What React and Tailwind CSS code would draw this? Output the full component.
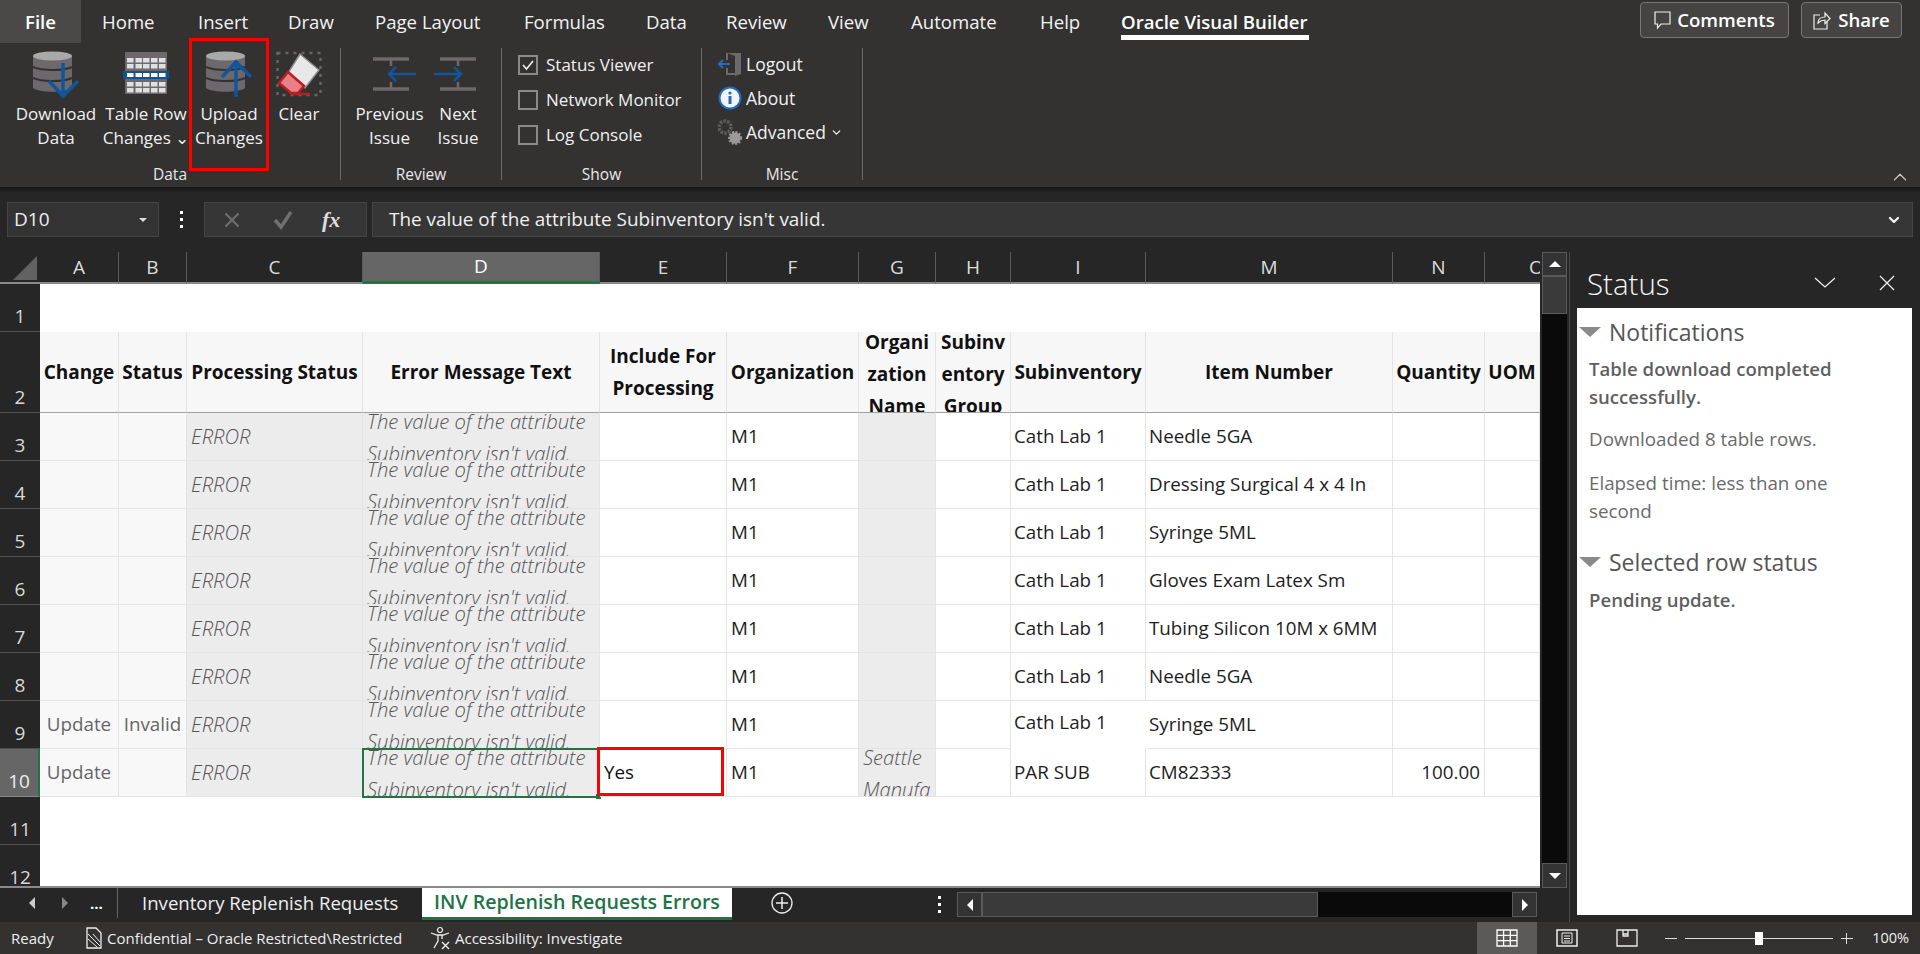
import { ChevronDown, ChevronUp, X } from "lucide-react";

const font = { fontFamily: '"Open Sans", "Noto Sans", sans-serif' };

const tabs = [
  { label: "Home", cls: "ml-[21px] w-[96px]" },
  { label: "Insert", cls: "w-[90px]" },
  { label: "Draw", cls: "w-[87px]" },
  { label: "Page Layout", cls: "w-[149px]" },
  { label: "Formulas", cls: "w-[122px]" },
  { label: "Data", cls: "w-[80px]" },
  { label: "Review", cls: "w-[102px]" },
  { label: "View", cls: "w-[83px]" },
  { label: "Automate", cls: "w-[129px]" },
  { label: "Help", cls: "w-[81px]" },
];

const items = [
  "Needle 5GA",
  "Dressing Surgical 4 x 4 In",
  "Syringe 5ML",
  "Gloves Exam Latex Sm",
  "Tubing Silicon 10M x 6MM",
  "Needle 5GA",
  "Syringe 5ML",
  "CM82333",
];

const colLetters = ["A", "B", "C", "D", "E", "F", "G", "H", "I", "M", "N"];

function DbIcon({ up }) {
  return (
    <svg width="46" height="48" viewBox="0 0 46 48">
      <path d="M0 6h39v32c-6 5-33 5-39 0z" fill="#6d686b" />
      <ellipse cx="19.5" cy="6" rx="19.5" ry="4.5" fill="#a9a9a9" />
      <path d="M0 17c8 4 31 4 39 0M0 28c8 4 31 4 39 0" stroke="#333231" strokeWidth="2" fill="none" />
      {up ? (
        <path d="M30 47V12M16 27l14-15 15 15" stroke="#10569c" strokeWidth="3.5" fill="none" />
      ) : (
        <path d="M30 13v33M16 31l14 15 15-15" stroke="#10569c" strokeWidth="3.5" fill="none" />
      )}
    </svg>
  );
}

function TableIcon() {
  return (
    <svg width="46" height="44" viewBox="0 0 46 44">
      <rect x="2" y="0" width="42" height="42" fill="#6d686b" />
      {[6, 12, 30, 36].map((y) =>
        [4, 12.5, 20, 28, 36].map((x) => <rect key={x + "-" + y} x={x} y={y} width="6.5" height="4.5" fill="#e0e0e0" />)
      )}
      <rect x="0" y="19" width="46" height="8" fill="#12528f" />
      {[4, 12.5, 20, 28, 36].map((x) => <rect key={x} x={x} y="21" width="6.5" height="4" fill="#fff" />)}
    </svg>
  );
}

function EraserIcon() {
  return (
    <svg width="46" height="46" viewBox="0 0 46 46">
      <rect x="1.5" y="2" width="43" height="42" fill="none" stroke="#666" strokeWidth="2.5" strokeDasharray="3 5" />
      <path d="M24 3l19 16-14 18L12 22z" fill="#e8e8e8" stroke="#8a8a8a" strokeWidth="1.5" />
      <path d="M12 21L28 35l-6 7H15L3 32z" fill="#e8808a" stroke="#b81f1f" strokeWidth="2.5" />
      <path d="M15 43h19" stroke="#b81f1f" strokeWidth="2.5" />
    </svg>
  );
}

function IssueIcon({ next }) {
  return (
    <svg width="43" height="34" viewBox="0 0 43 34" className={next ? "mr-[5px]" : "ml-[9px]"}>
      <g transform={next ? "translate(6 0)" : ""}>
        <path d="M0 2h36M0 32h36" stroke="#6d686b" strokeWidth="3.5" />
      </g>
      <path d={next ? "M24 2v7M24 25v7" : "M18 2v7M18 25v7"} stroke="#6d686b" strokeWidth="2.5" />
      {next ? (
        <path d="M0 17h27M20 10l7 7-7 7" stroke="#10569c" strokeWidth="2.5" fill="none" />
      ) : (
        <path d="M43 17H16M23 10l-7 7 7 7" stroke="#10569c" strokeWidth="2.5" fill="none" />
      )}
    </svg>
  );
}

function RibbonButton({ icon, lines, cls }) {
  return (
    <div className={`flex flex-col items-center ${cls}`}>
      <div className="flex h-[52px] items-center">{icon}</div>
      <div className="mt-[2px] flex flex-col items-center whitespace-nowrap text-[17px] leading-[24px] text-[#f0f0f0]">
        {lines.map((l) => (
          <span key={l}>{l}</span>
        ))}
      </div>
    </div>
  );
}

function Group({ label, cls, children }) {
  return (
    <div className={`flex h-[132px] flex-col border-r border-[#6a6a6a] ${cls}`}>
      <div className="min-h-0 flex-1">{children}</div>
      <div className="-mb-[3px] text-center text-[15.5px] leading-[18px] text-[#e8e8e8]">{label}</div>
    </div>
  );
}

function Check({ label, checked }) {
  return (
    <div className="flex h-[35px] items-center gap-[8px] text-[17px] text-[#f0f0f0]">
      <span className="flex h-[20px] w-[20px] items-center justify-center border-2 border-[#8a8a8a]">
        {checked && (
          <svg width="14" height="14" viewBox="0 0 14 14">
            <path d="M2 7l3.5 4L12 3" stroke="#f0f0f0" strokeWidth="1.6" fill="none" />
          </svg>
        )}
      </span>
      {label}
    </div>
  );
}

function Cell({ cls = "", children }) {
  return (
    <div className={`relative flex items-center overflow-hidden whitespace-nowrap border-b border-r border-[#e4e4e4] text-[18.8px] text-[#1d1d1d] ${cls}`}>
      {children}
    </div>
  );
}

function ErrorText() {
  return (
    <div className="-mt-[8px] self-start whitespace-normal pl-[4px] text-[20.2px] font-light italic leading-[32px] text-[#555]">
      The value of the attribute Subinventory isn't valid.
    </div>
  );
}

function DataRow({ i }) {
  const row = i + 3;
  const last = row === 10;
  const nine = row === 9;
  return (
    <>
      <RowHead n={row} active={last} />
      <Cell cls="justify-center bg-[#f8f8f8] text-[#666]">{row >= 9 && "Update"}</Cell>
      <Cell cls="justify-center bg-[#f8f8f8] text-[#666]">{nine && "Invalid"}</Cell>
      <Cell cls="bg-[#ececec] pl-[4px] text-[20.2px] font-light italic text-[#555]">ERROR</Cell>
      <Cell cls="!overflow-visible bg-[#ececec]">
        <div className="h-full overflow-hidden"><ErrorText /></div>
        {last && (
          <div className="absolute -left-[1px] -top-[1px] bottom-[-2px] right-[-1px] border-2 border-[#217346]">
            <div className="absolute -bottom-[3px] -right-[3px] h-[5px] w-[5px] bg-[#217346]" />
          </div>
        )}
      </Cell>
      <Cell cls="!overflow-visible pl-[4px] text-[#111]">
        {last && "Yes"}
        {last && <div className="absolute -left-[3px] -top-[2px] bottom-0 right-[2px] border-[3px] border-[#ff0000]" />}
      </Cell>
      <Cell cls="pl-[4px]">M1</Cell>
      <Cell cls="bg-[#ececec]">
        {last && (
          <div className="-mt-[8px] self-start whitespace-normal pl-[4px] text-[20.2px] font-light italic leading-[32px] text-[#555]">
            Seattle Manufa
          </div>
        )}
      </Cell>
      <Cell />
      <Cell cls={`pl-[3px] ${nine ? "border-white pb-[4px]" : ""}`}>{last ? "PAR SUB" : "Cath Lab 1"}</Cell>
      <Cell cls="pl-[3px]">{items[i]}</Cell>
      <Cell cls="justify-end pr-[4px]">{last && "100.00"}</Cell>
      <Cell />
    </>
  );
}

function RowHead({ n, active }) {
  return (
    <div className={`flex items-end justify-center border-b pb-[1px] text-[19px] leading-[28px] ${active ? "border-r-2 border-b-[#888] border-r-[#217346] bg-[#666] text-[#eee]" : "border-[#4f4f4f] bg-[#262626] text-[#d8d8d8]"}`}>
      {n}
    </div>
  );
}

function HeadCell({ children, cls = "" }) {
  return (
    <div className={`flex items-center justify-center overflow-hidden border-b border-r border-b-[#a0a0a0] border-r-[#e4e4e4] bg-[#f7f7f7] text-center text-[19px] font-bold leading-[32px] text-[#111] ${cls}`}>
      {children}
    </div>
  );
}

function ThreeLines({ lines }) {
  return (
    <div className="-mt-[6px] flex flex-col">
      {lines.map((l) => (
        <span key={l}>{l}</span>
      ))}
    </div>
  );
}

export default function App() {
  return (
    <div style={font} className="flex h-screen w-screen flex-col overflow-hidden bg-[#262626] text-white">
      {/* TAB BAR */}
      <div className="flex h-[43px] items-center bg-[#333231] text-[18.6px]">
        <div className="flex h-full w-[81px] items-center justify-center bg-[#4a4947] font-semibold">File</div>
        {tabs.map((t) => (
          <div key={t.label} className={`whitespace-nowrap text-[#f2f2f2] ${t.cls}`}>{t.label}</div>
        ))}
        <div className="relative flex h-full w-[188px] items-center whitespace-nowrap font-semibold">
          Oracle Visual Builder
          <div className="absolute bottom-[3px] left-0 right-0 h-[5px] bg-white" />
        </div>
        <div className="ml-auto mb-[3px] mr-[18px] flex gap-[12px] text-[18.6px] font-semibold">
          <div className="flex h-[36px] w-[149px] items-center justify-center gap-[6px] rounded-[4px] border border-[#777] bg-[#454443]">
            <svg width="17" height="19" viewBox="0 0 17 19">
              <path d="M1 1h15v12H7l-3.5 4v-4H1z" fill="none" stroke="#eee" strokeWidth="1.2" />
            </svg>
            Comments
          </div>
          <div className="flex h-[36px] w-[101px] items-center justify-center gap-[7px] rounded-[4px] border border-[#777] bg-[#454443]">
            <svg width="18" height="20" viewBox="0 0 18 20">
              <path d="M7 5H1v14h13v-7" fill="none" stroke="#eee" strokeWidth="1.2" />
              <path d="M5 13c0-4 3-6 7-6V3l5 5.5-5 5V10c-3 0-5 1-7 3z" fill="none" stroke="#eee" strokeWidth="1.2" />
            </svg>
            Share
          </div>
        </div>
      </div>

      {/* RIBBON */}
      <div className="relative flex h-[144px] items-start bg-[#333231] pt-[5px]">
        <Group label="Data" cls="w-[341px]">
          <div className="flex">
            <RibbonButton cls="w-[112px]" icon={<DbIcon />} lines={["Download", "Data"]} />
            <RibbonButton cls="w-[68px]" icon={<TableIcon />} lines={["Table Row", "Changes ⌄"]} />
            <div className="ml-[9px] h-[133px] w-[80px] -translate-y-[10px] border-[3px] border-[#ff0000] pt-[7px]">
              <RibbonButton cls="" icon={<DbIcon up />} lines={["Upload", "Changes"]} />
            </div>
            <RibbonButton cls="ml-[5px] w-[50px]" icon={<EraserIcon />} lines={["Clear"]} />
          </div>
        </Group>
        <Group label="Review" cls="w-[161px]">
          <div className="flex pl-[15px]">
            <RibbonButton cls="w-[67px]" icon={<IssueIcon />} lines={["Previous", "Issue"]} />
            <RibbonButton cls="w-[70px]" icon={<IssueIcon next />} lines={["Next", "Issue"]} />
          </div>
        </Group>
        <Group label="Show" cls="w-[200px]">
          <div className="-mt-[1px] flex flex-col pl-[16px]">
            <Check checked label="Status Viewer" />
            <Check label="Network Monitor" />
            <Check label="Log Console" />
          </div>
        </Group>
        <Group label="Misc" cls="w-[161px]">
          <div className="-mt-[1px] flex flex-col pl-[16px] text-[17.5px] text-[#f0f0f0]">
            <div className="flex h-[34px] items-center gap-[4px]">
              <svg width="24" height="26" viewBox="0 0 24 26">
                <path d="M9 2h14v21l-6 2V5z" fill="#6d686b" />
                <path d="M9 2v7M9 17v6h8" stroke="#6d686b" strokeWidth="2" fill="none" />
                <path d="M12 13H1M5 9l-4 4 4 4" stroke="#2a6db5" strokeWidth="2" fill="none" />
              </svg>
              Logout
            </div>
            <div className="flex h-[34px] items-center gap-[4px]">
              <svg width="24" height="24" viewBox="0 0 24 24">
                <circle cx="12" cy="12" r="10.5" fill="#f4f4f4" stroke="#1f6cc0" strokeWidth="2" />
                <circle cx="12" cy="7" r="1.6" fill="#1f6cc0" />
                <rect x="10.5" y="10" width="3" height="8" fill="#1f6cc0" />
              </svg>
              About
            </div>
            <div className="flex h-[34px] items-center gap-[4px]">
              <svg width="24" height="26" viewBox="0 0 24 26">
                <circle cx="7" cy="8" r="6" fill="none" stroke="#5c5c5c" strokeWidth="3.5" strokeDasharray="2.5 1.2" />
                <circle cx="17" cy="19" r="5.5" fill="#9a9a9a" />
                <circle cx="17" cy="19" r="6" fill="none" stroke="#9a9a9a" strokeWidth="2" strokeDasharray="2 1.5" />
              </svg>
              <span>Advanced</span>
              <ChevronDown size={13} strokeWidth={2.5} />
            </div>
          </div>
        </Group>
        <ChevronUp size={22} strokeWidth={1.3} className="absolute bottom-[-1px] right-[9px] text-[#c8c8c8]" />
      </div>
      <div className="h-[6px] bg-gradient-to-b from-[#161616] to-[#262626]" />

      {/* FORMULA BAR */}
      <div className="mt-[9px] flex h-[35px] items-stretch pl-[7px] text-[19px]">
        <div className="flex w-[152px] items-center justify-between border border-[#444] bg-[#333] pl-[6px] pr-[11px] text-[#eee]">
          D10
          <span className="h-0 w-0 border-x-[4px] border-t-[4px] border-x-transparent border-t-[#ddd]" />
        </div>
        <div className="flex w-[45px] flex-col items-center justify-center gap-[4px]">
          <span className="h-[3px] w-[3px] bg-white" />
          <span className="h-[3px] w-[3px] bg-white" />
          <span className="h-[3px] w-[3px] bg-white" />
        </div>
        <div className="flex w-[163px] items-center border border-[#444] bg-[#363636] pl-[15px]">
          <X size={24} strokeWidth={2} className="text-[#6f6f6f]" />
          <svg width="22" height="20" viewBox="0 0 22 20" className="ml-[28px]">
            <path d="M3 10l6 7L19 2" stroke="#6f6f6f" strokeWidth="3.5" fill="none" />
          </svg>
          <span className="ml-[28px] text-[22px] font-bold italic text-[#ddd]" style={{ fontFamily: '"Liberation Serif", serif' }}>fx</span>
        </div>
        <div className="ml-[5px] mr-[7px] flex flex-1 items-center justify-between border border-[#444] bg-[#363636] pl-[16px] pr-[10px] text-[18.9px] text-[#f0f0f0]">
          The value of the attribute Subinventory isn't valid.
          <ChevronDown size={16} strokeWidth={3.5} />
        </div>
      </div>

      {/* MAIN */}
      <div className="mt-[15px] flex min-h-0 flex-1">
        <div className="flex w-[1570px] flex-col border-r border-[#4a4a4a]">
          <div className="flex h-[636px]">
            {/* GRID */}
            <div className="grid h-full w-[1540px] grid-cols-[40px_79px_68px_176px_237px_127px_132px_77px_75px_135px_247px_92px_55px] grid-rows-[32px_48px_81px_repeat(10,48px)] overflow-hidden border-b-2 border-[#8a8a8a] bg-white">
              <div className="relative border-b-2 border-[#8a8a8a] bg-[#262626]">
                <div className="absolute bottom-[2px] right-[3px] h-0 w-0 border-b-[24px] border-l-[24px] border-b-[#626262] border-l-transparent" />
              </div>
              {colLetters.map((c) => (
                <div key={c} className={`flex items-center justify-center border-r border-[#5a5a5a] text-[19px] text-[#dcdcdc] ${c === "D" ? "border-b-[3px] border-b-[#217346] bg-[#666] text-white" : "border-b-2 border-b-[#8a8a8a] bg-[#262626]"}`}>
                  {c}
                </div>
              ))}
              <div className="overflow-hidden border-b-2 border-[#8a8a8a] bg-[#262626] pl-[44px] text-[19px] leading-[30px] text-[#dcdcdc]">O</div>

              <RowHead n={1} />
              <div className="col-span-12 bg-white" />

              <RowHead n={2} />
              <HeadCell>Change</HeadCell>
              <HeadCell>Status</HeadCell>
              <HeadCell>Processing Status</HeadCell>
              <HeadCell>Error Message Text</HeadCell>
              <HeadCell>Include For Processing</HeadCell>
              <HeadCell>Organization</HeadCell>
              <HeadCell cls="!items-start"><ThreeLines lines={["Organi", "zation", "Name"]} /></HeadCell>
              <HeadCell cls="!items-start"><ThreeLines lines={["Subinv", "entory", "Group"]} /></HeadCell>
              <HeadCell>Subinventory</HeadCell>
              <HeadCell>Item Number</HeadCell>
              <HeadCell>Quantity</HeadCell>
              <HeadCell>UOM</HeadCell>

              {items.map((_, i) => (
                <DataRow key={i} i={i} />
              ))}

              <RowHead n={11} />
              <div className="col-span-12 bg-white" />
              <RowHead n={12} />
              <div className="col-span-12 bg-white" />
            </div>

            {/* VERTICAL SCROLL */}
            <div className="ml-[2px] flex w-[25px] flex-col bg-[#0a0a0a]">
              <div className="flex h-[24px] items-center justify-center border border-[#5a5a5a] bg-[#333]">
                <span className="h-0 w-0 border-x-[6px] border-b-[6px] border-x-transparent border-b-white" />
              </div>
              <div className="h-[38px] border border-[#5a5a5a] bg-[#3a3a3a]" />
              <div className="flex-1" />
              <div className="flex h-[25px] items-center justify-center border border-[#5a5a5a] bg-[#333]">
                <span className="h-0 w-0 border-x-[6px] border-t-[6px] border-x-transparent border-t-white" />
              </div>
            </div>
          </div>

          {/* SHEET TABS */}
          <div className="flex h-[34px] items-start text-[18.6px]">
            <div className="flex h-[30px] w-[118px] items-center border-r border-[#666] pl-[29px]">
              <span className="h-0 w-0 border-y-[6px] border-r-[6px] border-y-transparent border-r-[#ccc]" />
              <span className="ml-[27px] h-0 w-0 border-y-[6px] border-l-[6px] border-y-transparent border-l-[#888]" />
              <span className="ml-[22px] text-[15px] font-bold text-white">...</span>
            </div>
            <div className="w-[304px] whitespace-nowrap pl-[24px] leading-[30px] text-[#eee]">Inventory Replenish Requests</div>
            <div className="h-[32px] w-[310px] whitespace-nowrap border-b-[3px] border-[#217346] bg-white text-center text-[19.6px] font-semibold leading-[28px] text-[#217346]">
              INV Replenish Requests Errors
            </div>
            <svg width="22" height="22" viewBox="0 0 22 22" className="ml-[39px] mt-[4px]">
              <circle cx="11" cy="11" r="10" fill="none" stroke="#eee" strokeWidth="1.3" />
              <path d="M11 5v12M5 11h12" stroke="#eee" strokeWidth="1.5" />
            </svg>
            <div className="ml-[145px] mt-[8px] flex flex-col gap-[4px]">
              <span className="h-[3px] w-[3px] bg-white" />
              <span className="h-[3px] w-[3px] bg-white" />
              <span className="h-[3px] w-[3px] bg-white" />
            </div>
            <div className="ml-[16px] mt-[4px] flex h-[25px] w-[580px] bg-[#0a0a0a]">
              <div className="flex w-[25px] items-center justify-center border border-[#5a5a5a] bg-[#333]">
                <span className="h-0 w-0 border-y-[6px] border-r-[6px] border-y-transparent border-r-white" />
              </div>
              <div className="w-[336px] border border-[#5a5a5a] bg-[#3a3a3a]" />
              <div className="flex-1" />
              <div className="flex w-[25px] items-center justify-center border border-[#5a5a5a] bg-[#333]">
                <span className="h-0 w-0 border-y-[6px] border-l-[6px] border-y-transparent border-l-white" />
              </div>
            </div>
          </div>
        </div>

        {/* STATUS PANEL */}
        <div className="flex flex-1 flex-col pb-[7px] pl-[7px] pr-[8px]">
          <div className="flex h-[56px] items-center pl-[10px] pt-[9px] text-[29.5px] font-light text-[#f4f4f4]">
            <span className="w-[227px]">Status</span>
            <svg width="22" height="12" viewBox="0 0 22 12" className="-mt-[4px]">
              <path d="M1 1l10 9 10-9" fill="none" stroke="#eee" strokeWidth="1.3" />
            </svg>
            <svg width="16" height="16" viewBox="0 0 16 16" className="-mt-[4px] ml-[43px]">
              <path d="M1 1l14 14M15 1L1 15" fill="none" stroke="#eee" strokeWidth="1.3" />
            </svg>
          </div>
          <div className="flex-1 bg-white pt-[10px] text-[#5f5f5f]">
            <div className="flex h-[28px] items-center text-[23px] text-[#555]">
              <span className="ml-[2px] h-0 w-0 border-x-[11px] border-t-[10px] border-x-transparent border-t-[#8a8a8a]" />
              <span className="ml-[8px]">Notifications</span>
            </div>
            <div className="mt-[9px] pl-[12px] pr-[20px] text-[18.6px] font-semibold leading-[28px]">Table download completed successfully.</div>
            <div className="mt-[14px] pl-[12px] text-[18.8px] leading-[28px] text-[#6a6a6a]">Downloaded 8 table rows.</div>
            <div className="mt-[16px] pl-[12px] text-[18.8px] leading-[28px] text-[#6a6a6a]">Elapsed time: less than one<br />second</div>
            <div className="mt-[23px] flex h-[28px] items-center text-[23px] text-[#555]">
              <span className="ml-[2px] h-0 w-0 border-x-[11px] border-t-[10px] border-x-transparent border-t-[#8a8a8a]" />
              <span className="ml-[8px]">Selected row status</span>
            </div>
            <div className="mt-[10px] pl-[12px] text-[18.6px] font-semibold leading-[28px]">Pending update.</div>
          </div>
        </div>
      </div>

      {/* STATUS BAR */}
      <div className="flex h-[32px] items-center bg-[#333231] pl-[11px] text-[15px] text-[#eee]">
        <span className="w-[74px]">Ready</span>
        <svg width="18" height="24" viewBox="0 0 18 24">
          <path d="M2 2h9l5 5v15H2z" fill="none" stroke="#eee" strokeWidth="1.3" />
          <path d="M3 8l12 12M3 13l9 8M8 8l7 8" stroke="#eee" strokeWidth="1" />
        </svg>
        <span className="ml-[4px] w-[323px] whitespace-nowrap">Confidential – Oracle Restricted\Restricted</span>
        <svg width="22" height="24" viewBox="0 0 22 24">
          <circle cx="10" cy="4" r="2.5" fill="none" stroke="#eee" strokeWidth="1.2" />
          <path d="M1 7l6 2h6l6-2M8 9v6l-4 7M12 9v4" stroke="#eee" strokeWidth="1.3" fill="none" />
          <path d="M12 16l7 7M19 16l-7 7" stroke="#eee" strokeWidth="1.4" />
        </svg>
        <span className="ml-[3px] whitespace-nowrap">Accessibility: Investigate</span>
        <div className="ml-auto flex h-full items-center">
          <div className="flex h-full w-[60px] items-center justify-center bg-[#5c5a58]">
            <svg width="22" height="18" viewBox="0 0 22 18">
              <path d="M1 1h20v16H1zM1 6.3h20M1 11.6h20M7.6 1v16M14.3 1v16" fill="none" stroke="#fff" strokeWidth="1.3" />
            </svg>
          </div>
          <div className="flex h-full w-[60px] items-center justify-center">
            <svg width="22" height="18" viewBox="0 0 22 18">
              <path d="M1 1h20v16H1z" fill="none" stroke="#eee" strokeWidth="1.5" />
              <path d="M6 4h10v10H6zM8 7h6M8 9.5h6M8 12h6" fill="none" stroke="#eee" strokeWidth="1" />
            </svg>
          </div>
          <div className="flex h-full w-[60px] items-center justify-center">
            <svg width="22" height="18" viewBox="0 0 22 18">
              <path d="M1 1h20v16H1zM7 1v6h5V1M12 5h-5" fill="none" stroke="#eee" strokeWidth="1.3" />
            </svg>
          </div>
          <div className="ml-[8px] h-[1px] w-[12px] bg-[#ddd]" />
          <div className="relative ml-[8px] h-[1px] w-[148px] bg-[#ddd]">
            <div className="absolute -top-[6px] left-[70px] h-[13px] w-[8px] bg-white" />
          </div>
          <div className="relative ml-[8px] h-[1px] w-[12px] bg-[#ddd]">
            <div className="absolute -top-[5px] left-[5px] h-[11px] w-[1px] bg-[#ddd]" />
          </div>
          <span className="ml-[19px] mr-[11px] text-[14.5px]">100%</span>
        </div>
      </div>
    </div>
  );
}
